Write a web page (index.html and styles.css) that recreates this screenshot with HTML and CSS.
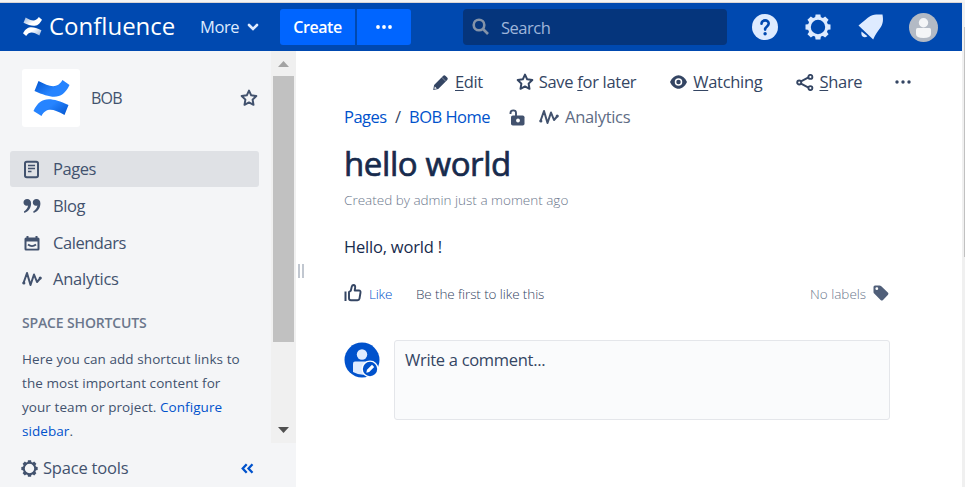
FILE: index.html
```html
<!DOCTYPE html>
<html lang="en">
<head>
<meta charset="utf-8">
<title>hello world - BOB - Confluence</title>
<link rel="stylesheet" href="styles.css">
</head>
<body>
<svg class="defs" width="0" height="0">
  <defs>
    <linearGradient id="blueTop" x1="0" y1="0" x2="1" y2="0.6"><stop offset="0" stop-color="#0052cc"/><stop offset="0.65" stop-color="#2684ff"/></linearGradient>
    <linearGradient id="blueBottom" x1="1" y1="1" x2="0" y2="0.4"><stop offset="0" stop-color="#0052cc"/><stop offset="0.65" stop-color="#2684ff"/></linearGradient>
    <linearGradient id="whiteTop" x1="0" y1="0" x2="1" y2="0.6"><stop offset="0" stop-color="#fff" stop-opacity="0.55"/><stop offset="0.65" stop-color="#fff"/></linearGradient>
    <linearGradient id="whiteBottom" x1="1" y1="1" x2="0" y2="0.4"><stop offset="0" stop-color="#fff" stop-opacity="0.55"/><stop offset="0.65" stop-color="#fff"/></linearGradient>
    <symbol id="star" viewBox="0 0 18 18"><path d="M9 1.600l2.200 4.700 5.100.7-3.700 3.600.9 5.200L9 13.400l-4.500 2.400.9-5.200L1.700 7l5.100-.7z" fill="none" stroke="currentColor" stroke-width="2" stroke-linejoin="round"/></symbol>
    <symbol id="wave" viewBox="0 0 20 16"><path d="M1.500 12L5 2 8.500 14 12 3.500 15 11l3.500-4" fill="none" stroke="currentColor" stroke-width="2" stroke-linejoin="round" stroke-linecap="round"/><circle cx="1.900" cy="12" r="1.500" fill="currentColor"/><circle cx="18.200" cy="7" r="1.500" fill="currentColor"/></symbol>
    <symbol id="gear" viewBox="0 0 26 26"><circle cx="13" cy="13" r="8.700" fill="none" stroke="currentColor" stroke-width="3"/><g fill="currentColor"><path id="cog" d="M9.900 4.800l.7-4.300h4.800l.7 4.300z"/><use href="#cog" transform="rotate(45 13 13)"/><use href="#cog" transform="rotate(90 13 13)"/><use href="#cog" transform="rotate(135 13 13)"/><use href="#cog" transform="rotate(180 13 13)"/><use href="#cog" transform="rotate(225 13 13)"/><use href="#cog" transform="rotate(270 13 13)"/><use href="#cog" transform="rotate(315 13 13)"/></g></symbol>
  </defs>
</svg>

<div class="window">
  <div class="app">
    <header class="header">
      <svg class="brand-mark" viewBox="0 0 36 36" preserveAspectRatio="none"><path fill="url(#whiteTop)" d="M5 1c12 7 19 8 25-1l6 5c-8 15-18 14-35 6z"/><path fill="url(#whiteBottom)" d="M31 35C19 28 12 27 6 36l-6-5c8-15 18-14 35-6z"/></svg>
      <span class="brand">Confluence</span>
      <span class="more">More</span>
      <svg class="chevron" viewBox="0 0 12 8"><path d="M2 2l4 4 4-4" fill="none" stroke="currentColor" stroke-width="2.600" stroke-linecap="round"/></svg>
      <button class="create">Create</button>
      <button class="create-more"><svg width="16" height="4" viewBox="0 0 16 4"><circle cx="2" cy="2" r="1.900"/><circle cx="8" cy="2" r="1.900"/><circle cx="14" cy="2" r="1.900"/></svg></button>
      <div class="search">
        <svg width="18" height="18" viewBox="0 0 18 18"><circle cx="7" cy="7" r="5.300"/><path d="M11 11l5 5"/></svg>
        <span>Search</span>
      </div>
      <div class="header-icons">
        <svg width="26" height="26" viewBox="0 0 26 26"><circle cx="13" cy="13" r="13" fill="#deebff"/><path d="M9.500 9.800c0-4.600 7.300-4.400 7.200-.2 0 2.900-3.600 2.800-3.600 6" fill="none" stroke="#0049b0" stroke-width="2.600" stroke-linecap="round"/><circle cx="13.100" cy="19.800" r="1.700" fill="#0049b0"/></svg>
        <svg class="gear-light" width="26" height="26"><use href="#gear"/></svg>
        <svg width="26" height="26" viewBox="0 0 26 26"><path fill="#deebff" d="M.5 11.500C5 8 9 4 12.500 2 16 .2 20 .2 24.500.6c.9 5.500.7 9.400-2.300 13.400-3.200 4.300-5.200 7-7 11.500zM3.500 17.500l6 4.700c-2.500 1.800-5.300.9-5.900-1.200-.4-1.100-.3-2.300-.1-3.500z"/></svg>
        <svg width="29" height="29" viewBox="0 0 29 29"><circle cx="14.500" cy="14.500" r="14.500" fill="#b3bac5"/><circle cx="14.500" cy="9.700" r="4.700" fill="#f4f5f7"/><path fill="#f4f5f7" d="M7 16.500q0-1.500 1.500-1.500h12q1.500 0 1.500 1.500v4.500q0 4-7.500 4T7 21z"/></svg>
      </div>
    </header>

    <div class="columns">
      <aside class="sidebar">
        <div class="scroller">
          <div class="scroll-body">
            <div class="space">
              <div class="space-logo"><svg width="37" height="36" viewBox="0 0 36 36"><path fill="url(#blueTop)" d="M5 1c11 6 19 8 24-1l7 5c-7 15-17 14-35 6z"/><path fill="url(#blueBottom)" d="M31 35C20 29 13 27 8 36l-8-5c7-15 17-14 35-6z"/></svg></div>
              <span class="space-name">BOB</span>
              <svg class="space-star" width="18" height="18"><use href="#star"/></svg>
            </div>
            <nav class="nav">
              <a class="nav-item active"><svg width="19" height="19" viewBox="0 0 19 19"><rect x="2.500" y="1.700" width="13" height="15.600" rx="1.800" fill="none" stroke="currentColor" stroke-width="2"/><path d="M5.500 5.500h7M5.500 8.500h7M5.500 11.500h3.500" stroke="currentColor" stroke-width="1.700"/></svg><span>Pages</span></a>
              <a class="nav-item"><svg width="19" height="19" viewBox="0 0 19 19"><path id="quote" fill="currentColor" d="M4.600 2C2.500 2 1 3.500 1 5.400s1.300 3.300 3.200 3.300c.6 0 1-.1 1.400-.3-.3 2.400-1.800 4.400-4.200 6l.5 1.700c4.200-1.800 6.700-5.300 6.700-9.600C8.600 3.600 7.100 2 4.600 2z"/><use href="#quote" x="9.300"/></svg><span>Blog</span></a>
              <a class="nav-item"><svg width="19" height="19" viewBox="0 0 19 19"><path fill="currentColor" d="M2 5q0-1.500 1.500-1.500H4V2h2v1.500h7V2h2v1.500h.500Q17 3.500 17 5v10q0 1.500-1.500 1.500h-12Q2 16.500 2 15z"/><path fill="#f4f5f7" d="M4 7.500h11v7.200H4z"/><path d="M5.500 10.500q4 3.200 8 0" fill="none" stroke="currentColor" stroke-width="1.800"/></svg><span>Calendars</span></a>
              <a class="nav-item last"><svg width="20" height="16"><use href="#wave"/></svg><span>Analytics</span></a>
            </nav>
            <h2 class="shortcuts-title">SPACE SHORTCUTS</h2>
            <p class="shortcuts">Here you can add shortcut links to<br>the most important content for<br>your team or project. <a>Configure</a><br><a>sidebar</a>.</p>
          </div>
          <div class="scrollbar">
            <svg class="arrow-up" viewBox="0 0 11 6"><path d="M0 6L5.500 0 11 6z" fill="#a3a3a3"/></svg>
            <div class="thumb"></div>
            <svg class="arrow-down" viewBox="0 0 11 6"><path d="M0 0l5.500 6L11 0z" fill="#505050"/></svg>
          </div>
        </div>
        <div class="tools">
          <svg width="17" height="17"><use href="#gear"/></svg>
          <span class="tools-label">Space tools</span>
          <svg class="collapse" width="13" height="11" viewBox="0 0 13 11"><path d="M5.700 1.200l-4 4.300 4 4.300M11.500 1.200l-4 4.300 4 4.300" fill="none" stroke="#0052cc" stroke-width="2.300"/></svg>
        </div>
      </aside>
      <div class="splitter"><i></i><i></i></div>

      <main class="content">
        <div class="actions">
          <svg class="edit-icon" width="17" height="17" viewBox="0 0 17 17"><path fill="currentColor" d="M1.200 16l.9-5L11 1.900q1.300-1.300 2.600 0l1.600 1.600q1.300 1.300 0 2.600L6.200 15z"/><path d="M9.700 3.200l4.100 4.200" stroke="#fff" stroke-width=".4"/><path d="M2.800 12.500l2 2-2.400.5z" fill="#fff"/></svg><span class="edit"><u>E</u>dit</span>
          <svg class="save-icon" width="18" height="18"><use href="#star"/></svg><span class="save">Save <u>f</u>or later</span>
          <svg class="watch-icon" width="17" height="14" viewBox="0 0 17 14"><path fill="currentColor" d="M0 7C4-2 13-2 17 7 13 16 4 16 0 7z"/><circle cx="8.500" cy="7" r="3" fill="none" stroke="#fff" stroke-width="1.500"/></svg><span class="watch"><u>W</u>atching</span>
          <svg class="share-icon" width="18" height="17" viewBox="0 0 18 17"><g fill="none" stroke="currentColor" stroke-width="1.900"><path d="M5 7.300l7.500-4M5 9.700l7.500 4"/><circle cx="3.200" cy="8.500" r="2"/><circle cx="14.400" cy="2.900" r="2"/><circle cx="14.400" cy="14.100" r="2"/></g></svg><span class="share"><u>S</u>hare</span>
          <svg class="dots" width="16" height="4" viewBox="0 0 16 4" fill="currentColor"><circle cx="2" cy="2" r="1.700"/><circle cx="8" cy="2" r="1.700"/><circle cx="14" cy="2" r="1.700"/></svg>
        </div>
        <div class="crumbs">
          <a class="c-pages">Pages</a><span class="slash">/</span><a class="c-home">BOB Home</a>
          <svg class="lock" width="16" height="17" viewBox="0 0 16 17"><path d="M1.500 5V4q0-2.600 2.800-2.600T7 4v3" fill="none" stroke="currentColor" stroke-width="1.900"/><rect x="2" y="6.500" width="13.500" height="10" rx="1.800" fill="currentColor"/><circle cx="9" cy="11.500" r="1.900" fill="#fff"/></svg>
          <svg class="c-wave" width="20" height="16"><use href="#wave"/></svg><span class="c-analytics">Analytics</span>
        </div>
        <h1 class="title">hello world</h1>
        <div class="byline">Created by admin just a moment ago</div>
        <p class="body-text">Hello, world !</p>
        <div class="likes">
          <svg class="thumb-up" width="18" height="18" viewBox="0 0 18 18"><path d="M1.500 7.500V17" stroke="currentColor" stroke-width="2"/><path d="M5 8l1.800-1.200 1-4.300Q8.200 1 9.600 1q1.700.2 1.600 2.200l-.5 3.300h4.200q1.900 0 1.600 2l-1 6q-.3 1.700-2 1.700H7q-2 0-2-2z" fill="none" stroke="currentColor" stroke-width="1.900" stroke-linejoin="round"/></svg>
          <a class="like">Like</a><span class="first">Be the first to like this</span>
          <span class="no-labels">No labels</span>
          <svg class="tag" width="16" height="16" viewBox="0 0 16 16"><path fill="#505f79" d="M.5 2Q.5.500 2 .5h4.500q1 0 1.800.7l6.500 6.300q1.200 1.200 0 2.400l-4.800 5q-1.200 1.200-2.400 0L1.200 8.600Q.5 8 .5 7z"/><circle cx="3.800" cy="3.700" r="1.400" fill="#fff"/></svg>
        </div>
        <div class="comment">
          <svg width="37" height="37" viewBox="0 0 37 37"><circle cx="18" cy="18" r="17.500" fill="#0052cc"/><circle cx="18" cy="12.500" r="5.200" fill="#deebff"/><path fill="#deebff" d="M9 21.500q0-2 2-2h14q2 0 2 2V31q-9 4-18-1z"/><circle cx="26" cy="27" r="8.500" fill="#fff"/><circle cx="26" cy="27" r="7.200" fill="#0052cc"/><path d="M22.300 30.700l.7-3 5-5 2.200 2.200-5 5z" fill="#fff"/></svg>
          <div class="comment-box">Write a comment...</div>
        </div>
      </main>
    </div>
  </div>
  <div class="window-scroll"><div class="window-thumb"></div></div>
</div>
</body>
</html>
```
FILE: styles.css
```css
* { box-sizing: border-box; }
body { margin: 0; width: 965px; height: 487px; overflow: hidden; background: #fff; color: #344563; font: 400 16px/20px "Open Sans", "Noto Sans", sans-serif; white-space: nowrap; }
.defs { display: block; }
svg { flex: none; display: block; }
a { text-decoration: none; }
u { text-decoration-thickness: 1px; text-underline-offset: 2px; }
.window { display: flex; height: 487px; border-top: 2px solid #f4f4f4; }
.app { width: 962px; border-top: 1px solid #d9d5d5; }
.window-scroll { width: 3px; padding: 25px 0 0 2px; background: #f0f0f0; }
.window-thumb { height: 230px; background: #c1c1c1; }

.header { display: flex; align-items: center; height: 48px; background: #0049b0; color: #deebff; }
.brand-mark { width: 19px; height: 19px; margin-left: 23px; margin-top: -2px; }
.brand { width: 127px; margin: -2px 0 0 7px; color: #fff; font-size: 24px; line-height: 30px; letter-spacing: 0; }
.more { width: 39px; margin-left: 24px; font-size: 16.500px; letter-spacing: -0.4px; }
.chevron { width: 12px; height: 8px; margin-left: 8px; }
.create, .create-more { height: 36px; padding: 0; border: 0; background: #0065ff; color: #fff; }
.create { width: 75px; margin-left: 21px; border-radius: 3px 0 0 3px; font: 600 16px/20px "Open Sans", sans-serif; letter-spacing: -0.4px; }
.create-more { display: flex; align-items: center; justify-content: center; width: 54px; margin-left: 2px; border-radius: 0 3px 3px 0; fill: #fff; }
.search { display: flex; align-items: center; gap: 11px; width: 264px; height: 36px; margin-left: 52px; padding-left: 9px; border-radius: 4px; background: #05357c; color: #9fb5da; font-size: 16.500px; letter-spacing: -0.5px; }
.search span { padding-top: 2px; }
.search svg { fill: none; stroke: #8493a8; stroke-width: 2.600; }
.header-icons { display: flex; align-items: center; margin-left: 25px; }
.header-icons svg + svg { margin-left: 27px; }
.header-icons svg:last-child { margin-left: 25px; }
.gear-light { color: #deebff; }

.columns { display: flex; height: 436px; }
.sidebar { width: 296px; background: #f4f5f7; color: #42526e; }
.scroller { display: flex; height: 392px; }
.scroll-body { width: 271px; }
.space { display: flex; align-items: center; margin: 18px 0 0 22px; height: 58px; }
.space-logo { display: flex; align-items: center; justify-content: center; width: 58px; height: 58px; border-radius: 3px; background: #fff; }
.space-name { width: 32px; margin-left: 11px; letter-spacing: -0.8px; }
.space-star { margin-left: 117px; color: #42526e; }
.nav { margin: 24px 12px 0 10px; }
.nav-item { display: flex; align-items: center; height: 36px; margin-bottom: 1px; padding-left: 12px; border-radius: 3px; font-size: 16.500px; }
.nav-item svg { width: 20px; }
.nav-item span { margin-left: 11px; letter-spacing: -0.450px; }
.nav-item.active { background: #dfe1e5; }
.nav-item.last { margin: -1px 0 2px; }
.nav-item.last span { letter-spacing: -0.250px; }
.shortcuts-title { margin: 16px 0 0 22px; color: #6b778c; font-size: 14px; font-weight: 600; line-height: 20px; letter-spacing: -0.150px; }
.shortcuts { margin: 14px 0 0 22px; font-size: 13.500px; line-height: 24px; letter-spacing: 0.070px; }
.shortcuts a { color: #0052cc; }
.scrollbar { width: 25px; padding: 10px 2px; background: #f0f0f0; }
.arrow-up, .arrow-down { width: 11px; height: 6px; margin-left: 5px; }
.thumb { height: 266px; margin: 9px 0 85px; background: #c1c1c1; }
.tools { display: flex; align-items: center; height: 44px; padding: 6px 0 0 21px; }
.tools-label { width: 86px; margin-left: 5px; font-size: 16.500px; letter-spacing: -0.2px; }
.collapse { margin-left: 112px; }
.splitter { display: flex; gap: 2px; width: 8px; padding: 213px 0 0 2px; }
.splitter i { width: 2px; height: 14px; background: #c1c7d0; }

.content { width: 586px; padding: 21px 0 0 40px; font-size: 16.500px; }
.actions { display: flex; align-items: center; height: 20px; }
.actions span { letter-spacing: -0.3px; }
.edit-icon { margin-left: 88px; }
.actions .edit { width: 29px; margin-left: 6px; letter-spacing: -0.4px; }
.save-icon { margin-left: 33px; }
.save { width: 98px; margin-left: 5px; }
.watch-icon { margin-left: 34px; }
.watch { width: 71px; margin-left: 6px; }
.share-icon { margin-left: 34px; }
.share { width: 42px; margin-left: 5px; }
.dots { margin-left: 34px; }
.crumbs { display: flex; align-items: center; height: 20px; margin-top: 15px; letter-spacing: -0.5px; }
.crumbs a { color: #0052cc; }
.c-pages { width: 43px; }
.slash { width: 7px; margin-left: 8px; }
.c-home { width: 82px; margin-left: 7px; }
.lock { margin-left: 18px; color: #42526e; }
.c-wave { margin-left: 14px; color: #42526e; }
.c-analytics { margin-left: 6px; color: #5e6c84; letter-spacing: -0.3px; }
.title { margin: 16px 0 0; color: #172b4d; font-size: 33px; font-weight: 400; line-height: 42px; letter-spacing: -0.4px; -webkit-text-stroke: 0.7px #172b4d; }
.byline { margin-top: 5px; color: #6b778c; font-size: 13.500px; font-weight: 300; }
.body-text { margin: 27px 0 0; color: #172b4d; letter-spacing: -0.2px; }
.likes { display: flex; align-items: center; height: 20px; margin-top: 27px; font-size: 13.500px; font-weight: 300; }
.thumb-up { margin-top: -2px; }
.like { width: 24px; margin-left: 7px; color: #0052cc; letter-spacing: -0.2px; }
.first { width: 129px; margin-left: 23px; letter-spacing: -0.1px; }
.no-labels { width: 57px; margin-left: 265px; color: #6b778c; }
.tag { margin: -2px 0 0 6px; }
.comment { display: flex; align-items: flex-start; margin-top: 36px; }
.comment > svg { margin-top: 2px; }
.comment-box { width: 496px; height: 80px; margin-left: 13px; padding: 9px 10px; border: 1px solid #e4e6ea; border-radius: 3px; background: #fafbfc; letter-spacing: -0.3px; }
```
